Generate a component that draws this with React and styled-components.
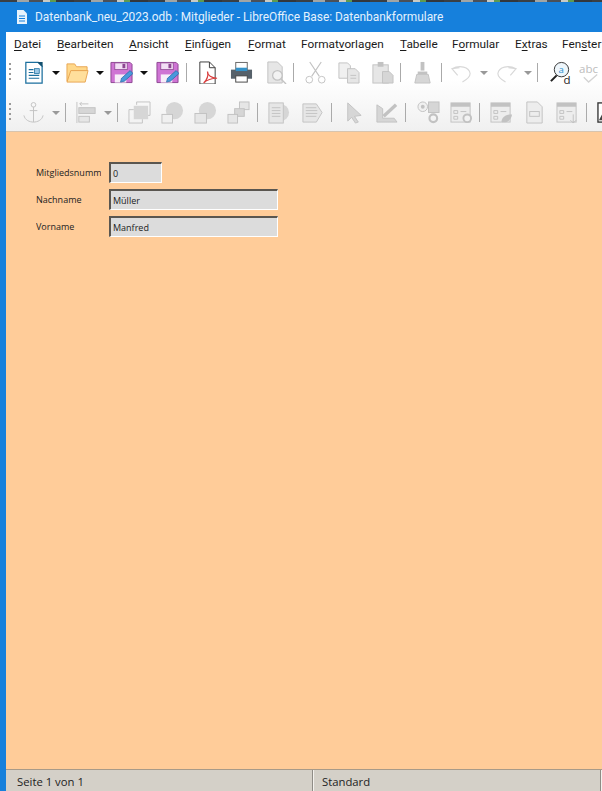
import React from "react";
import styled, { createGlobalStyle } from "styled-components";

const Global = createGlobalStyle`
  html, body { margin: 0; padding: 0; background: #ffcc99; }
  body { width: 602px; height: 791px; overflow: hidden; font-family: "Open Sans", "Liberation Sans", sans-serif; }
`;

const Window = styled.div`
  width: 602px;
  height: 791px;
  display: flex;
  flex-direction: column;
  overflow: hidden;
  background: #1680dc;
`;

const ScreenEdge = styled.div`
  height: 2px;
  flex: none;
  background: repeating-linear-gradient(90deg, #3a3f44 0 17px, #a2a5a4 17px 29px, #4b5058 29px 43px, #c9cac4 43px 50px, #5f9a50 50px 56px, #33373c 56px 74px);
`;

const TitleBar = styled.div`
  height: 30px;
  flex: none;
  display: flex;
  align-items: center;
  gap: 8px;
  padding-left: 17px;
  background: #1680dc;
  color: #e4f1fc;
  font-family: Roboto, "Open Sans", sans-serif;
  font-size: 11.9px;
  white-space: nowrap;
`;

const Body = styled.div`
  flex: 1;
  min-height: 0;
  margin-left: 6px;
  display: flex;
  flex-direction: column;
  background: #ffcc99;
`;

const MenuBar = styled.div`
  height: 24px;
  flex: none;
  display: flex;
  align-items: center;
  padding-left: 8px;
  background: #fff;
  color: #1a1a1a;
  font-family: Roboto, "Open Sans", sans-serif;
  font-size: 11.8px;
  white-space: nowrap;
`;

const MenuItem = styled.span`
  flex: none;
  width: ${(p) => p.$w}px;
  u { text-decoration: underline; text-underline-offset: 2px; text-decoration-thickness: 1px; }
`;

const Toolbars = styled.div`
  flex: none;
  height: 75px;
  display: flex;
  flex-direction: column;
  gap: 5px;
  background: linear-gradient(#ffffff, #ffffff 30%, #f0f0f0);
  border-bottom: 1px solid #d8c4ae;
`;

const Toolbar = styled.div`
  height: ${(p) => p.$h}px;
  flex: none;
  display: flex;
  align-items: center;
  padding-left: 3px;
  overflow: hidden;
`;

const Grip = styled.span`
  flex: none;
  width: 2px;
  height: 20px;
  background: repeating-linear-gradient(#999 0 2px, transparent 2px 5px);
`;

const Slot = styled.span`
  flex: none;
  display: flex;
  align-items: center;
  justify-content: center;
  width: 24px;
  height: 24px;
  margin-left: ${(p) => p.$ml}px;
  svg { display: block; }
`;

const Drop = styled.span`
  flex: none;
  width: 0;
  height: 0;
  margin-left: ${(p) => p.$ml}px;
  border-left: 4px solid transparent;
  border-right: 4px solid transparent;
  border-top: 4px solid ${(p) => (p.$off ? "#999" : "#111")};
`;

const Sep = styled.span`
  flex: none;
  width: 1px;
  height: 19px;
  margin-left: ${(p) => p.$ml}px;
  background: #aaa;
`;

const Canvas = styled.div`
  flex: 1;
  min-height: 0;
  padding: 30px 0 0 30px;
  background: #ffcc99;
`;

const Form = styled.div`
  display: grid;
  grid-template-columns: 73px auto;
  grid-template-rows: 21px 21px 21px;
  justify-content: start;
  row-gap: 6px;
  color: #222;
  font-size: 9px;
`;

const Label = styled.div`
  display: flex;
  align-items: center;
  overflow: hidden;
  white-space: nowrap;
  width: 65px;
`;

const Field = styled.div`
  width: ${(p) => p.$w}px;
  height: 21px;
  box-sizing: border-box;
  display: flex;
  align-items: center;
  padding-left: 2px;
  background: #dcdcdc;
  border-top: 2px solid #5a5650;
  border-left: 2px solid #5a5650;
  border-right: 1px solid #fff;
  border-bottom: 1px solid #fff;
`;

const StatusBar = styled.div`
  height: 21px;
  flex: none;
  display: flex;
  background: #d4d0c8;
  border-top: 1px solid #a89a88;
  color: #222;
  font-size: 11.3px;
  line-height: 24px;
`;

const StatusCell = styled.div`
  flex: none;
  box-sizing: border-box;
  width: ${(p) => p.$w}px;
  padding-left: ${(p) => p.$pl}px;
  border-right: 1px solid #8f8c86;
  box-shadow: 1px 0 0 #f4f2ee;
`;

const L = "#c2c2c2";
const F = "#d6d6d6";
const P = "#e6e6e6";

const icons = {
  doc: (
    <>
      <path d="M4 1.5h13l4 4V23H4z" fill="#fff" stroke="#1b6f9e" strokeWidth="1.3" />
      <path d="M16 1h5.5v5.5z" fill="#14506f" />
      <path d="M7 9h5M7 12h5M7 15h11M7 18h11" stroke="#1b6f9e" strokeWidth="1.1" />
      <rect x="13" y="8" width="5" height="5" fill="#9cc8e6" stroke="#1b6f9e" strokeWidth=".8" />
    </>
  ),
  folder: (
    <>
      <path d="M1 21V3h8l2 3h11v4H6L3 21z" fill="#ffd88a" stroke="#e8a552" />
      <path d="M1 22l4-12h18l-3 12z" fill="#ffdf9c" stroke="#e8a552" />
    </>
  ),
  save: (
    <>
      <path d="M1 1.5h20l2 2v19H1z" fill="#cf74d4" stroke="#8c4691" />
      <rect x="5" y="2" width="13" height="7" fill="#f3dff5" stroke="#8c4691" strokeWidth=".8" />
      <rect x="13" y="3" width="3" height="4.5" fill="#8c4691" />
      <rect x="5" y="14" width="12" height="8.5" fill="#f8edf9" />
      <path d="M11 22l1-4 9-8 3 3-9 8z" fill="#4a98dc" stroke="#2b6ca8" strokeWidth=".8" />
    </>
  ),
  pdf: (
    <>
      <path d="M4 1h10l6 6v17H4z" fill="#fff" stroke="#3a3a3a" />
      <path d="M14 1v6h6" fill="none" stroke="#3a3a3a" />
      <path d="M8 23c3-3 5-8 4-12 0 4 4 7 10 7-5 0-10 1-14 5z" fill="none" stroke="#d94040" strokeWidth="1.3" />
    </>
  ),
  print: (
    <>
      <rect x="6" y="1.5" width="12" height="8" fill="#fff" stroke="#666" />
      <path d="M1 9h22v9.5H1z" fill="#56616a" />
      <rect x="6" y="7" width="12" height="3.5" fill="#3592c8" />
      <rect x="6" y="15.5" width="12" height="6.5" fill="#fff" stroke="#444" />
    </>
  ),
  preview: (
    <>
      <path d="M4 1h10l5 5v17H4z" fill={P} stroke={L} />
      <circle cx="14" cy="15" r="5" fill="#f2f2f2" stroke={L} strokeWidth="1.3" />
      <path d="M18 19l5 5" stroke={L} strokeWidth="1.4" />
    </>
  ),
  cut: (
    <>
      <path d="M6 1l10 15M18 1L8 16" stroke={L} strokeWidth="1.2" fill="none" />
      <circle cx="5.5" cy="19.5" r="3.5" fill="none" stroke={L} />
      <circle cx="18.5" cy="19.5" r="3.5" fill="none" stroke={L} />
    </>
  ),
  copy: (
    <>
      <path d="M2 2h9l3 3v13H2z" fill="#f0f0f0" stroke={L} />
      <path d="M11 8h8l4 4v11H11z" fill={P} stroke={L} />
      <path d="M14 15h6M14 18h6" stroke={L} />
    </>
  ),
  paste: (
    <>
      <rect x="2" y="4" width="16" height="19" fill={P} stroke={L} />
      <rect x="7" y="1" width="6" height="5" fill={L} />
      <path d="M12 11h7l4 4v8H12z" fill={F} stroke={L} />
    </>
  ),
  brush: (
    <>
      <path d="M10 1h4v9h-4z" fill={L} />
      <path d="M7 11h10v3H7z" fill={L} />
      <path d="M6 14h12l2 9H4z" fill={F} stroke={L} />
    </>
  ),
  undo: <path d="M8 15L2 8l8-1M2 8c8-4 18-2 19 5 0 3-3 6-8 9" fill="none" stroke="#d8d8d8" strokeWidth="1.2" />,
  redo: <path d="M16 15l6-7-8-1M22 8C14 4 4 6 3 13c0 3 3 6 8 9" fill="none" stroke="#d8d8d8" strokeWidth="1.2" />,
  find: (
    <>
      <circle cx="13" cy="9" r="7.5" fill="#eef6fb" stroke="#333" />
      <path d="M8 15l-6 6" stroke="#222" strokeWidth="2.2" />
      <text x="10" y="12" fontSize="10" fontFamily="Open Sans" fill="#2a8fd0">a</text>
      <text x="15" y="24" fontSize="12" fontFamily="Open Sans" fill="#222">d</text>
    </>
  ),
  spell: (
    <>
      <text x="0" y="12" fontSize="12" fontFamily="Open Sans" fill="#bdbdbd">abc</text>
      <path d="M5 17l5 5 9-8" fill="none" stroke="#d4d4d4" strokeWidth="1.4" />
    </>
  ),
  anchor: (
    <>
      <circle cx="12" cy="4" r="2.4" fill="none" stroke={L} />
      <path d="M12 6v16M8 10h8M2 15c1 5 6 7 10 7s9-2 10-7" fill="none" stroke={L} />
    </>
  ),
  align: (
    <>
      <path d="M2 1v22" stroke={L} />
      <rect x="4" y="7" width="17" height="6" fill={F} stroke={L} />
      <rect x="4" y="16" width="11" height="6" fill={P} stroke={L} />
      <path d="M14 3H5l2-2M5 3l2 2" fill="none" stroke={L} />
    </>
  ),
  front: (
    <>
      <path d="M9 1h14v14h-3M9 1v3" fill="none" stroke={L} />
      <rect x="6" y="5" width="15" height="14" fill={F} />
      <path d="M1 9h5M1 9v14h14v-4" fill="none" stroke={L} />
    </>
  ),
  circle: (
    <>
      <circle cx="14" cy="10" r="9" fill={F} />
      <rect x="1" y="14" width="11" height="9" fill="#f0f0f0" stroke={L} />
    </>
  ),
  circle2: (
    <>
      <circle cx="14" cy="10" r="9" fill={F} />
      <rect x="1" y="13" width="12" height="10" fill={P} stroke={L} />
    </>
  ),
  squares: (
    <>
      <rect x="13" y="1" width="10" height="8" fill={P} stroke={L} />
      <rect x="8" y="8" width="10" height="8" fill={F} stroke={L} />
      <rect x="1" y="14" width="10" height="9" fill={P} stroke={L} />
    </>
  ),
  wrap: (
    <>
      <circle cx="14" cy="12" r="9" fill={F} />
      <rect x="2" y="2" width="15" height="21" fill={P} stroke={L} />
      <path d="M5 7h9M5 10h9M5 13h9M5 16h9" stroke={L} />
    </>
  ),
  wrap2: (
    <>
      <path d="M2 3h14l6 9-6 10H2z" fill={P} stroke={L} />
      <path d="M5 7h11M5 10h12M5 13h12M5 16h11" stroke={L} />
    </>
  ),
  pointer: <path d="M6 2l14 13-7 1 4 6-3 1-4-6-4 4z" fill={F} stroke={L} />,
  triangle: (
    <>
      <path d="M2 4v18h21l-3-4H8V8z" fill={F} stroke={L} />
      <path d="M9 16L22 4" stroke={L} strokeWidth="3.5" />
    </>
  ),
  controls: (
    <>
      <circle cx="6" cy="6" r="5" fill="#f0f0f0" stroke={L} />
      <circle cx="6" cy="6" r="2" fill={L} />
      <rect x="12" y="1" width="11" height="11" fill={F} stroke={L} />
      <circle cx="17" cy="18" r="4" fill="none" stroke={L} strokeWidth="2.2" />
    </>
  ),
  formProps: (
    <>
      <rect x="1" y="2" width="20" height="20" fill="#ededed" stroke={L} />
      <rect x="1" y="2" width="20" height="4" fill={L} />
      <path d="M4 10h4v3H4zM4 16h4v3H4zM11 11h6" fill="none" stroke={L} />
      <circle cx="18" cy="18" r="4" fill="#f2f2f2" stroke={L} strokeWidth="2" />
    </>
  ),
  formLeaf: (
    <>
      <rect x="1" y="2" width="20" height="20" fill="#ededed" stroke={L} />
      <rect x="1" y="2" width="20" height="4" fill={L} />
      <path d="M4 10h4v3H4zM4 16h4v3H4zM11 11h6" fill="none" stroke={L} />
      <path d="M12 22c0-5 4-8 11-8-1 6-5 9-11 8z" fill={L} />
    </>
  ),
  field: (
    <>
      <path d="M4 1h11l5 5v17H4z" fill="#ededed" stroke={L} />
      <rect x="7" y="11" width="10" height="5" fill="none" stroke={L} />
    </>
  ),
  formDown: (
    <>
      <rect x="1" y="2" width="20" height="20" fill="#ededed" stroke={L} />
      <rect x="1" y="2" width="20" height="4" fill={L} />
      <path d="M4 10h4v3H4zM4 16h4v3H4zM11 11h6" fill="none" stroke={L} />
      <path d="M18 14v9M15 20l3 3 3-3" fill="none" stroke={L} />
    </>
  ),
  dark: (
    <>
      <rect x="1" y="2" width="22" height="20" fill="#fff" stroke="#333" strokeWidth="1.4" />
      <path d="M2 20l6-11 5 6 4-3 5 8z" fill="#444" />
    </>
  ),
};

const row1 = [
  ["doc", 10], ["d", 7], ["folder", 5], ["d", 7], ["save", 5], ["d", 7], ["save", 7], ["s", 7],
  ["pdf", 8], ["print", 10], ["preview", 10], ["s", 6], ["cut", 9], ["copy", 9], ["paste", 10], ["s", 6],
  ["brush", 9], ["s", 7], ["undo", 7], ["dg", 7], ["redo", 6], ["dg", 6], ["s", 5], ["find", 10], ["spell", 6],
];

const row2 = [
  ["anchor", 10], ["dg", 7], ["s", 5], ["align", 8], ["dg", 6], ["s", 5], ["front", 9], ["circle", 9],
  ["circle2", 9], ["squares", 9], ["s", 7], ["wrap", 8], ["wrap2", 10], ["s", 7], ["pointer", 9],
  ["triangle", 9], ["s", 7], ["controls", 10], ["formProps", 9], ["s", 6], ["formLeaf", 9], ["field", 9],
  ["formDown", 9], ["s", 7], ["dark", 9],
];

const ToolRow = ({ items, height }) => (
  <Toolbar $h={height}>
    <Grip />
    {items.map(([name, ml], i) => {
      if (name === "s") return <Sep key={i} $ml={ml} />;
      if (name === "d") return <Drop key={i} $ml={ml} />;
      if (name === "dg") return <Drop key={i} $ml={ml} $off />;
      return (
        <Slot key={i} $ml={ml}>
          <svg width="23" height="23" viewBox="0 0 24 24">{icons[name]}</svg>
        </Slot>
      );
    })}
  </Toolbar>
);

const menus = [
  [<><u>D</u>atei</>, 43],
  [<><u>B</u>earbeiten</>, 72],
  [<><u>A</u>nsicht</>, 56],
  [<><u>E</u>infügen</>, 63],
  [<><u>F</u>ormat</>, 53],
  [<>Format<u>v</u>orlagen</>, 99],
  [<><u>T</u>abelle</>, 52],
  [<>F<u>o</u>rmular</>, 63],
  [<>E<u>x</u>tras</>, 47],
  [<>Fen<u>s</u>ter</>, 40],
];

const App = () => (
  <Window>
    <Global />
    <ScreenEdge />
    <TitleBar>
      <svg width="10" height="14" viewBox="0 0 10 14">
        <path d="M0 0h6.5L10 3.5V14H0z" fill="#e8f3fc" />
        <path d="M2 6h6M2 8.5h6M2 11h6" stroke="#1680dc" />
      </svg>
      Datenbank_neu_2023.odb : Mitglieder - LibreOffice Base: Datenbankformulare
    </TitleBar>
    <Body>
      <MenuBar>
        {menus.map(([label, w], i) => (
          <MenuItem key={i} $w={w}>{label}</MenuItem>
        ))}
      </MenuBar>
      <Toolbars>
        <ToolRow items={row1} height={33} />
        <ToolRow items={row2} height={37} />
      </Toolbars>
      <Canvas>
        <Form>
          <Label>Mitgliedsnummer</Label>
          <Field $w={53}>0</Field>
          <Label>Nachname</Label>
          <Field $w={169}>Müller</Field>
          <Label>Vorname</Label>
          <Field $w={169}>Manfred</Field>
        </Form>
      </Canvas>
      <StatusBar>
        <StatusCell $w={307} $pl={11}>Seite 1 von 1</StatusCell>
        <StatusCell $w={288} $pl={9}>Standard</StatusCell>
      </StatusBar>
    </Body>
  </Window>
);

export default App;
